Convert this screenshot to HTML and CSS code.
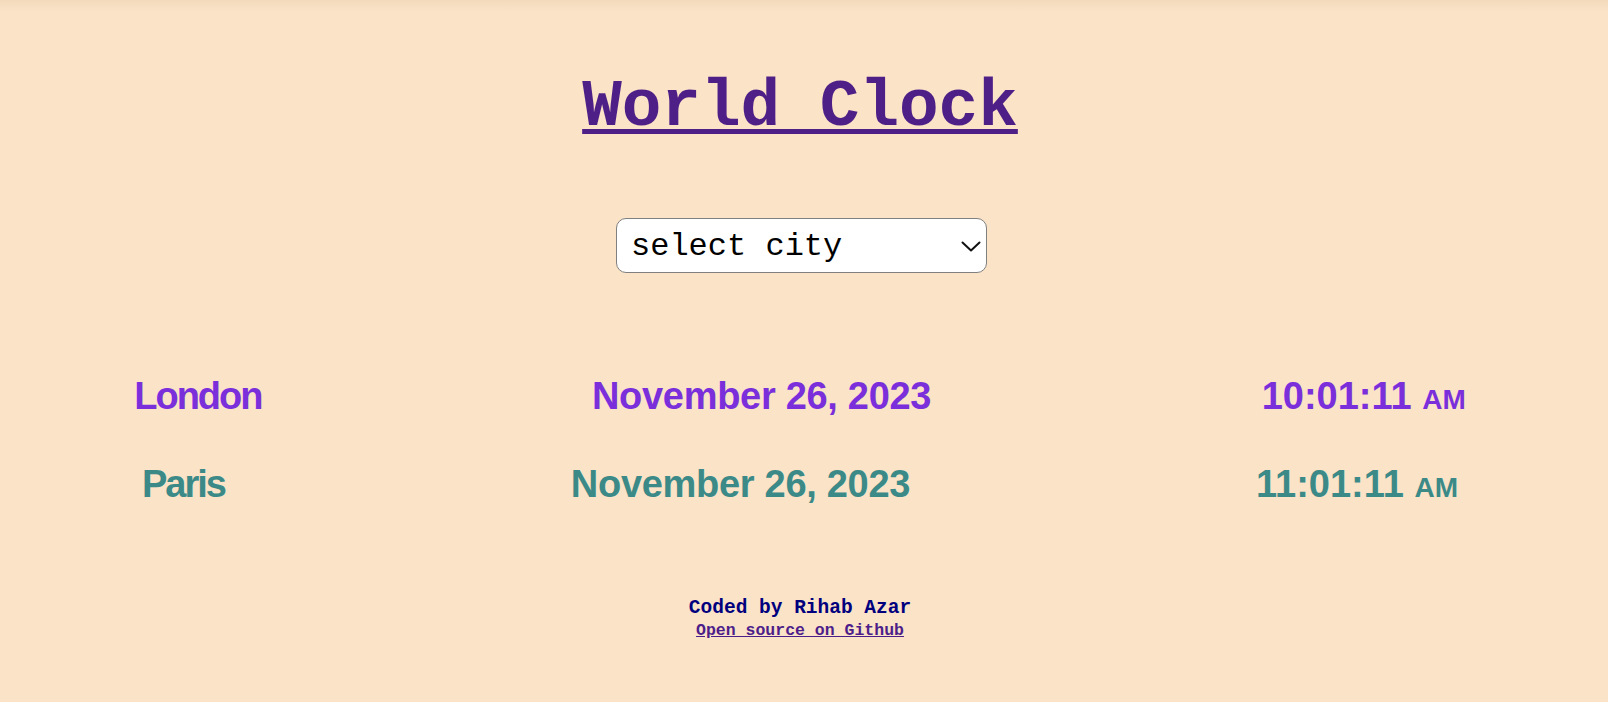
FILE: index.html
```
<!DOCTYPE html>
<html lang="en">
<head>
<meta charset="utf-8">
<title>World Clock</title>
<link rel="stylesheet" href="styles.css">
</head>
<body>
<div class="page">
  <h1 class="title">World Clock</h1>
  <div class="picker">
    <div class="select-wrap">
      <select class="city-select">
        <option>select city</option>
        <option>Tokyo</option>
        <option>Sydney</option>
        <option>New York</option>
      </select>
      <svg class="chevron" width="20" height="11" viewBox="0 0 20 11" aria-hidden="true">
        <polyline points="1.5,1.5 10,9.5 18.5,1.5" fill="none" stroke="#111" stroke-width="2" stroke-linecap="round" stroke-linejoin="round"/>
      </svg>
    </div>
  </div>
  <div class="cities">
    <div class="city city-london">
      <div class="name">London</div>
      <div class="date">November 26, 2023</div>
      <div class="time">10:01:11 <small class="ampm">AM</small></div>
    </div>
    <div class="city city-paris">
      <div class="name">Paris</div>
      <div class="date">November 26, 2023</div>
      <div class="time">11:01:11 <small class="ampm">AM</small></div>
    </div>
  </div>
  <footer class="footer">
    <div class="credit">Coded by Rihab Azar</div>
    <a class="source" href="#">Open source on Github</a>
  </footer>
</div>
</body>
</html>
```
FILE: styles.css
```
html, body {
  margin: 0;
  padding: 0;
}

body {
  background-color: #fae3c7;
  background-image: linear-gradient(#f3dabc, #fae3c7);
  background-size: 100% 12px;
  background-repeat: no-repeat;
  font-family: "Liberation Sans", Arial, sans-serif;
  overflow: hidden;
  height: 702px;
}

.page {
  width: 1600px;
  padding-top: 70px;
}

.title {
  margin: 0;
  text-align: center;
  font-family: "Liberation Mono", "Courier New", monospace;
  font-weight: 700;
  font-size: 66px;
  color: #4e1f86;
  text-decoration: underline;
  text-decoration-thickness: 5px;
  text-underline-offset: 4px;
}

.picker {
  display: flex;
  justify-content: center;
  margin-top: 73px;
}

.select-wrap {
  position: relative;
  margin-left: 3px;
}

.city-select {
  display: block;
  box-sizing: border-box;
  width: 371px;
  height: 55px;
  padding: 2px 40px 0 14px;
  font-family: "Liberation Mono", "Courier New", monospace;
  font-size: 32px;
  color: #000;
  background-color: #fff;
  border: 1px solid #808080;
  border-radius: 10px;
  -webkit-appearance: none;
  appearance: none;
}

.chevron {
  position: absolute;
  right: 6px;
  top: 23px;
  pointer-events: none;
}

.cities {
  margin: 102px -31px 0 -31px;
  display: flex;
  flex-direction: column;
  gap: 45px;
}

.city {
  display: flex;
  justify-content: space-around;
  align-items: baseline;
  font-size: 38px;
  font-weight: 700;
}

.city-london {
  color: #7b2fdb;
}

.city-paris {
  color: #3c8a87;
}

.name {
  letter-spacing: -2px;
}

.date {
  letter-spacing: -0.3px;
}

.ampm {
  font-size: 28px;
}

.footer {
  margin-top: 91px;
  text-align: center;
  font-family: "Liberation Mono", "Courier New", monospace;
  font-weight: 700;
}

.credit {
  font-size: 19.5px;
  color: #00007e;
}

.source {
  display: inline-block;
  margin-top: 2px;
  font-size: 16.5px;
  color: #4d1d8a;
  text-decoration: underline;
}
```
